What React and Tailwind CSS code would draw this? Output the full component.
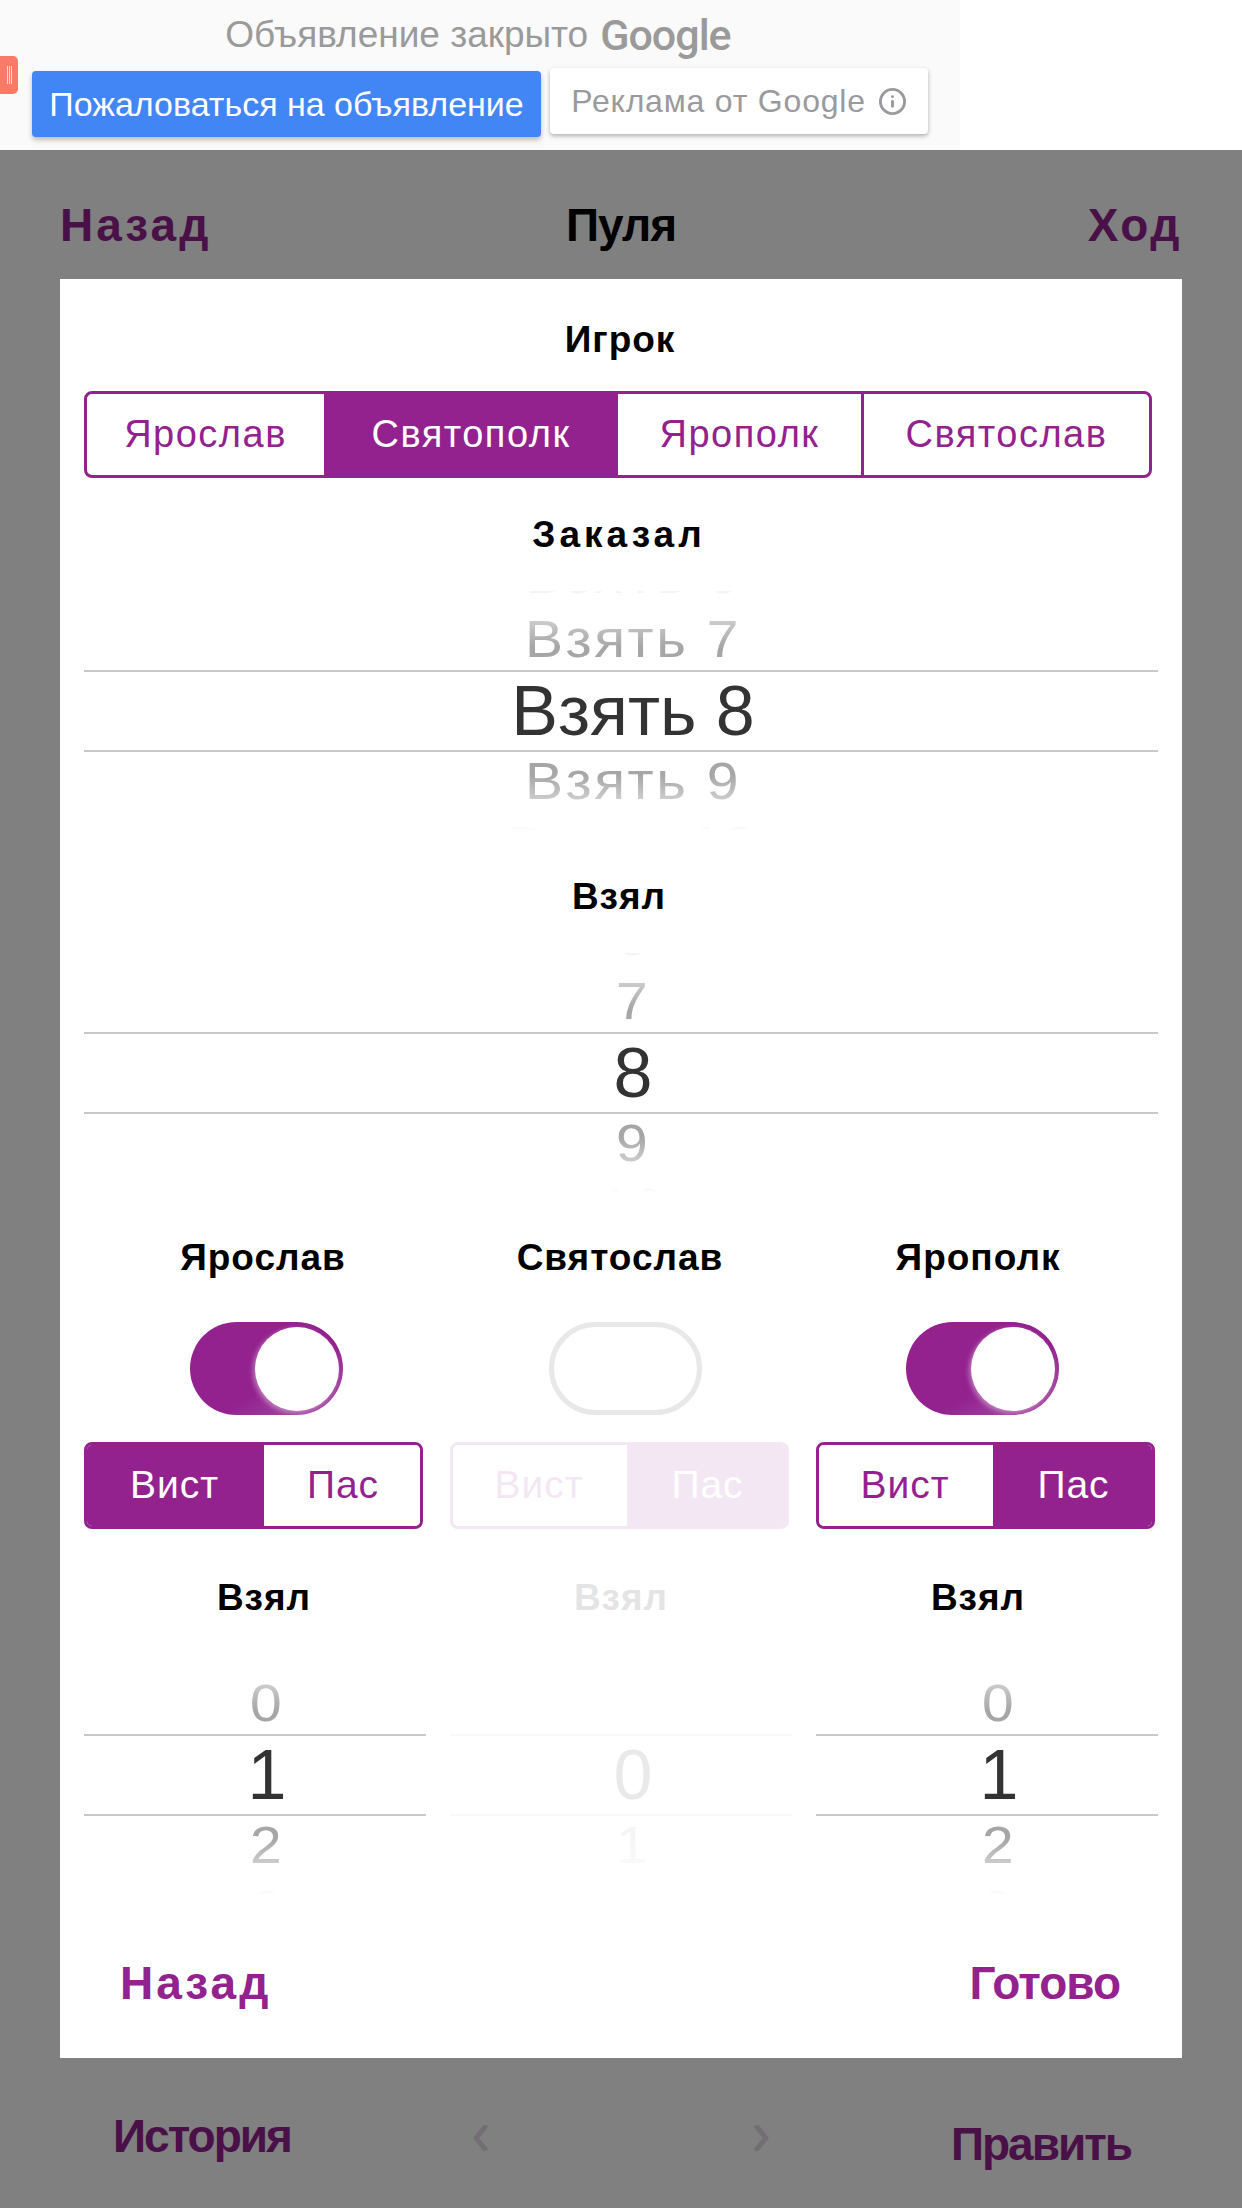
// Preference score screen: ad banner, dimmed page behind a white modal with wheel pickers.
import { Info } from 'lucide-react'

const MARKER = "font-['Liberation_Sans',sans-serif] font-bold"
const PLAIN = "font-['Liberation_Sans',sans-serif]"

const SIDE_ROW = 'shrink-0 flex items-center text-[57px] text-[#a6a6a6] scale-y-90 tracking-[2.5px]'

function Label({ children, className = '' }) {
  return (
    <div className={`${MARKER} h-[50px] flex items-center justify-center text-[37px] tracking-[1px] text-black ${className}`}>
      {children}
    </div>
  )
}

// before/after hold the rows around the selected value, nearest first
function Wheel({ before = [], selected, after = [] }) {
  return (
    <div className={`${PLAIN} relative h-[240px] overflow-hidden flex flex-col items-center justify-center pl-[24px]`}>
      <div className={`h-[58px] ${SIDE_ROW}`}>{before[1]}</div>
      <div className={`h-[70px] ${SIDE_ROW}`}>{before[0]}</div>
      <div className="h-[72px] shrink-0 flex items-center text-[70px] text-[#333333]">{selected}</div>
      <div className={`h-[70px] ${SIDE_ROW}`}>{after[0]}</div>
      <div className={`h-[58px] ${SIDE_ROW}`}>{after[1]}</div>
      {/* fade at both ends of the wheel */}
      <div className="absolute inset-x-0 top-0 h-[56px] bg-gradient-to-b from-white/90 to-transparent" />
      <div className="absolute inset-x-0 bottom-0 h-[56px] bg-gradient-to-t from-white to-transparent" />
      <div className="absolute inset-x-0 top-[79px] h-[2px] bg-[#c8c8c8]" />
      <div className="absolute inset-x-0 top-[159px] h-[2px] bg-[#c8c8c8]" />
    </div>
  )
}

function Switch({ on, className = '' }) {
  if (!on) {
    return <div className={`w-[153px] h-[93px] rounded-full border-[5px] border-[#e8e8e8] bg-white ${className}`} />
  }
  return (
    <div className={`w-[153px] h-[93px] rounded-full bg-gradient-to-br from-[#93228f] from-60% to-[#ab50a8] flex items-center justify-end pr-[4px] ${className}`}>
      <div className="w-[84px] h-[84px] rounded-full bg-white shadow-[-2px_2px_5px_rgba(255,255,255,0.4)]" />
    </div>
  )
}

function VistPas({ active, split, className = '' }) {
  const seg = (on) =>
    `flex items-center justify-center ${on ? 'bg-[#93228f] text-white' : 'bg-white text-[#93228f]'}`
  return (
    <div className={`${PLAIN} w-[339px] h-[87px] rounded-[8px] border-[3px] border-[#93228f] overflow-hidden flex text-[39px] tracking-[1px] ${className}`}>
      <div className={`${split} pr-[2px] ${seg(active === 'vist')}`}>Вист</div>
      <div className={`flex-1 pl-[2px] ${seg(active === 'pas')}`}>Пас</div>
    </div>
  )
}

export default function App() {
  return (
    <div className="relative w-[1242px] h-[2208px] overflow-hidden bg-[#808080] flex flex-col">
      {/* Ad banner */}
      <div className="h-[150px] shrink-0 bg-white">
        <div className="relative w-[960px] h-full bg-[#fafafa] flex flex-col">
          <div className="absolute left-0 top-[56px] w-[18px] h-[38px] rounded-r-[5px] bg-[#fa7a6a] flex items-center justify-center gap-[1px]">
            <div className="w-[1px] h-[18px] bg-white/70" />
            <div className="w-[1px] h-[18px] bg-white/70" />
            <div className="w-[1px] h-[18px] bg-white/70" />
          </div>
          <div className={`${PLAIN} h-[68px] pt-[2px] pr-[4px] flex items-center justify-center gap-[12px] text-[37px] text-[#9a9a9a]`}>
            <span>Объявление закрыто</span>
            <span className="font-['Roboto',sans-serif] font-medium text-[43px] tracking-[-1px]">Google</span>
          </div>
          <div className={`${PLAIN} flex items-start gap-[9px] pl-[32px]`}>
            <div className="mt-[3px] w-[509px] h-[66px] rounded-[4px] bg-[#4285f4] shadow-[0_3px_5px_rgba(0,0,0,0.25)] flex items-center justify-center text-[34px] text-white">
              Пожаловаться на объявление
            </div>
            <div className="w-[378px] h-[66px] rounded-[4px] bg-white shadow-[0_2px_4px_rgba(0,0,0,0.3)] flex items-center justify-center gap-[12px] text-[32px] tracking-[0.8px] text-[#9a9a9e]">
              <span>Реклама от Google</span>
              <Info size={29} strokeWidth={2.4} />
            </div>
          </div>
        </div>
      </div>

      {/* Page behind the modal, dimmed */}
      <div className={`${MARKER} px-[60px] mt-[41px] h-[52px] grid grid-cols-3 items-center text-[46px] text-[#4a1048]`}>
        <span className="tracking-[3px]">Назад</span>
        <span className="text-center text-black tracking-[-1px]">Пуля</span>
        <span className="text-right tracking-[2.5px]">Ход</span>
      </div>

      <div className={`${MARKER} mt-auto mb-[36px] h-[60px] flex items-start text-[46px] text-[#4a1048]`}>
        <span className="ml-[113px] mt-[-10px] w-[358px] tracking-[-2px]">История</span>
        <svg width="20" height="26" viewBox="0 0 20 26" className="mt-[13px]">
          <polyline points="14,2 5,13 14,24" fill="none" stroke="#736d74" strokeWidth="5" strokeLinecap="round" strokeLinejoin="round" />
        </svg>
        <svg width="20" height="26" viewBox="0 0 20 26" className="ml-[260px] mt-[13px]">
          <polyline points="6,2 15,13 6,24" fill="none" stroke="#736d74" strokeWidth="5" strokeLinecap="round" strokeLinejoin="round" />
        </svg>
        <span className="ml-auto mr-[111px] mt-[-2px] tracking-[-2px]">Править</span>
      </div>

      {/* Modal */}
      <div className="absolute left-[60px] top-[279px] w-[1122px] h-[1779px] bg-white px-[24px] flex flex-col">
        <Label className="mt-[36px] pr-[2px]">Игрок</Label>

        <div className={`${PLAIN} mt-[26px] w-[1068px] h-[87px] rounded-[8px] border-[3px] border-[#93228f] overflow-hidden flex text-[38px] tracking-[1.5px] text-[#93228f]`}>
          <div className="w-[237px] flex items-center justify-center">Ярослав</div>
          <div className="w-[294px] flex items-center justify-center bg-[#93228f] text-white">Святополк</div>
          <div className="w-[246px] flex items-center justify-center border-r-[3px] border-[#93228f]">Ярополк</div>
          <div className="flex-1 flex items-center justify-center">Святослав</div>
        </div>

        <Label className="mt-[32px] pr-[4px] tracking-[4px]">Заказал</Label>
        <div className="mt-[31px]">
          <Wheel before={['Взять 7', 'Взять 6']} selected="Взять 8" after={['Взять 9', 'Взять 10']} />
        </div>

        <Label className="mt-[41px] pr-[4px]">Взял</Label>
        <div className="mt-[31px]">
          <Wheel before={['7', '6']} selected="8" after={['9', '10']} />
        </div>

        <div className="mt-[40px] grid grid-cols-3 gap-x-[24px]">
          <div className="flex flex-col">
            <Label className="pl-[16px]">Ярослав</Label>
            <Switch on className="mt-[39px] ml-[106px]" />
            <VistPas active="vist" split="w-[177px]" className="mt-[27px]" />
            <Label className="mt-[44px] pl-[18px]">Взял</Label>
            <div className="mt-[32px]">
              <Wheel before={['0']} selected="1" after={['2', '3']} />
            </div>
          </div>

          <div className="flex flex-col">
            <Label className="pr-[2px]">Святослав</Label>
            <Switch className="mt-[39px] ml-[99px]" />
            <VistPas active="pas" split="w-[174px]" className="mt-[27px] opacity-10" />
            <Label className="mt-[44px] opacity-10">Взял</Label>
            <div className="mt-[32px] opacity-10">
              <Wheel selected="0" after={['1', '2']} />
            </div>
          </div>

          <div className="flex flex-col">
            <Label className="pr-[18px]">Ярополк</Label>
            <Switch on className="mt-[39px] ml-[90px]" />
            <VistPas active="pas" split="w-[174px]" className="mt-[27px]" />
            <Label className="mt-[44px] pr-[18px]">Взял</Label>
            <div className="mt-[32px]">
              <Wheel before={['0']} selected="1" after={['2', '3']} />
            </div>
          </div>
        </div>

        <div className={`${MARKER} mt-[63px] h-[50px] flex items-center justify-between pl-[36px] pr-[38px] text-[46px] text-[#93228f]`}>
          <span className="tracking-[3px]">Назад</span>
          <span className="tracking-[-1px]">Готово</span>
        </div>
      </div>
    </div>
  )
}
